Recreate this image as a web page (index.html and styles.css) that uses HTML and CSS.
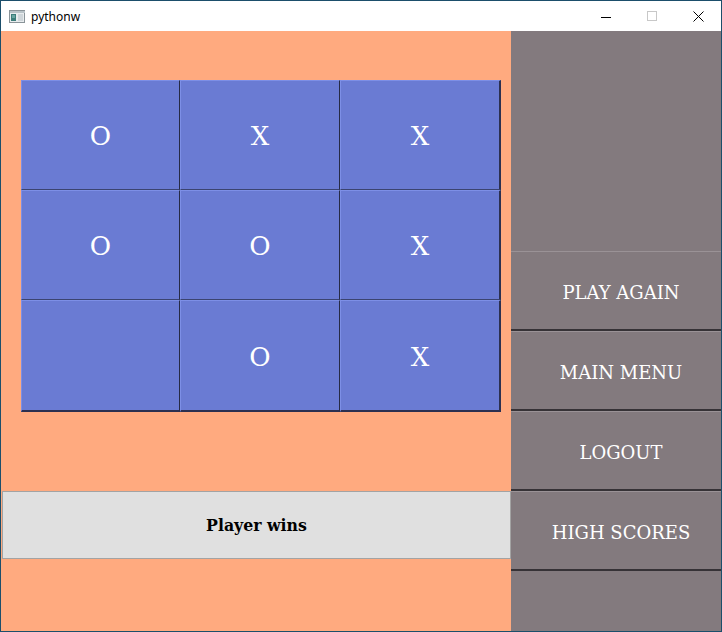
FILE: index.html
```html
<!DOCTYPE html>
<html>
<head>
<meta charset="utf-8">
<title>pythonw</title>
<link rel="stylesheet" href="styles.css">
</head>
<body>
<div class="window">
  <div class="titlebar">
    <svg class="app-icon" width="16" height="14" viewBox="0 0 16 14">
      <rect x="0.5" y="0.5" width="15" height="12" fill="#e8ecee" stroke="#8a9499"/>
      <rect x="1" y="1" width="15" height="2" fill="#b9c3c8"/>
      <rect x="2" y="4" width="5" height="7" fill="#3c7d7a"/>
      <rect x="3" y="5" width="3" height="3" fill="#6aa7a2"/>
      <rect x="9" y="4" width="5" height="7" fill="#cfd6da"/>
    </svg>
    <span class="title">pythonw</span>
    <div class="controls">
      <span class="ctl"><svg width="10" height="10" viewBox="0 0 10 10"><line x1="0" y1="5.5" x2="10" y2="5.5" stroke="#000" stroke-width="1"/></svg></span>
      <span class="ctl"><svg width="10" height="10" viewBox="0 0 10 10"><rect x="0.5" y="0.5" width="9" height="9" fill="none" stroke="#c8c8c8" stroke-width="1"/></svg></span>
      <span class="ctl"><svg width="11" height="11" viewBox="0 0 11 11"><path d="M0.5 0.5 L10.5 10.5 M10.5 0.5 L0.5 10.5" stroke="#000" stroke-width="1"/></svg></span>
    </div>
  </div>
  <div class="content">
    <div class="board-panel">
      <div class="board">
        <div class="cell">O</div>
        <div class="cell">X</div>
        <div class="cell">X</div>
        <div class="cell">O</div>
        <div class="cell">O</div>
        <div class="cell">X</div>
        <div class="cell"></div>
        <div class="cell">O</div>
        <div class="cell">X</div>
      </div>
      <div class="status">Player wins</div>
    </div>
    <div class="side-panel">
      <div class="side-top"></div>
      <div class="side-btn">PLAY AGAIN</div>
      <div class="side-btn">MAIN MENU</div>
      <div class="side-btn">LOGOUT</div>
      <div class="side-btn">HIGH SCORES</div>
      <div class="side-rest"></div>
    </div>
  </div>
</div>
</body>
</html>
```
FILE: styles.css
```css
html, body {
  margin: 0;
  padding: 0;
  background: #ffffff;
}
.window {
  width: 722px;
  height: 632px;
  box-sizing: border-box;
  border: 1px solid #1b4e6b;
  display: flex;
  flex-direction: column;
  overflow: hidden;
}
.titlebar {
  height: 30px;
  flex: none;
  background: #ffffff;
  display: flex;
  align-items: center;
  font-family: "Noto Sans", "Open Sans", sans-serif;
  font-size: 12px;
  color: #000;
}
.app-icon {
  margin-left: 8px;
  margin-top: 1px;
}
.title {
  margin-left: 6px;
}
.controls {
  margin-left: auto;
  display: flex;
  height: 30px;
}
.ctl {
  width: 46px;
  display: flex;
  align-items: center;
  justify-content: center;
}
.ctl:first-child {
  padding-top: 1px;
}
.content {
  flex: 1;
  display: flex;
}
.board-panel {
  width: 510px;
  background: #ffaa7f;
  display: flex;
  flex-direction: column;
  padding-top: 49px;
  box-sizing: border-box;
}
.board {
  margin-left: 20px;
  width: 480px;
  height: 332px;
  display: grid;
  grid-template-columns: 159px 160px 161px;
  grid-template-rows: 110px 110px 112px;
}
.cell {
  box-sizing: border-box;
  background: #6a7bd3;
  border-top: 1px solid #7d8fe6;
  border-left: 1px solid #7d8fe6;
  border-right: 1px solid #262a45;
  border-bottom: 1px solid #3b4470;
  color: #ffffff;
  font-family: "DejaVu Serif", serif;
  font-size: 26px;
  display: flex;
  align-items: center;
  justify-content: center;
  padding-top: 2px;
}
.cell:nth-child(3n) {
  border-right: 2px solid #2c3050;
}
.cell:nth-child(n+7) {
  border-bottom: 2px solid #2c3050;
}
.status {
  margin-top: 79px;
  margin-left: 1px;
  height: 68px;
  box-sizing: border-box;
  background: #e0e0e0;
  border: 1px solid #a3a3a3;
  display: flex;
  align-items: center;
  justify-content: center;
  font-family: "DejaVu Serif Condensed", "DejaVu Serif", serif;
  font-stretch: condensed;
  font-weight: bold;
  font-size: 17.5px;
  color: #000;
}
.side-panel {
  width: 210px;
  background: #837a7e;
  display: flex;
  flex-direction: column;
}
.side-top {
  height: 220px;
  flex: none;
}
.side-btn {
  height: 80px;
  flex: none;
  box-sizing: border-box;
  border-top: 1px solid #9a9296;
  border-bottom: 2px solid #363236;
  display: flex;
  align-items: center;
  justify-content: center;
  padding-left: 10px;
  padding-top: 4px;
  color: #ffffff;
  font-family: "DejaVu Serif", serif;
  font-size: 18px;
}
.side-rest {
  flex: 1;
}
```
